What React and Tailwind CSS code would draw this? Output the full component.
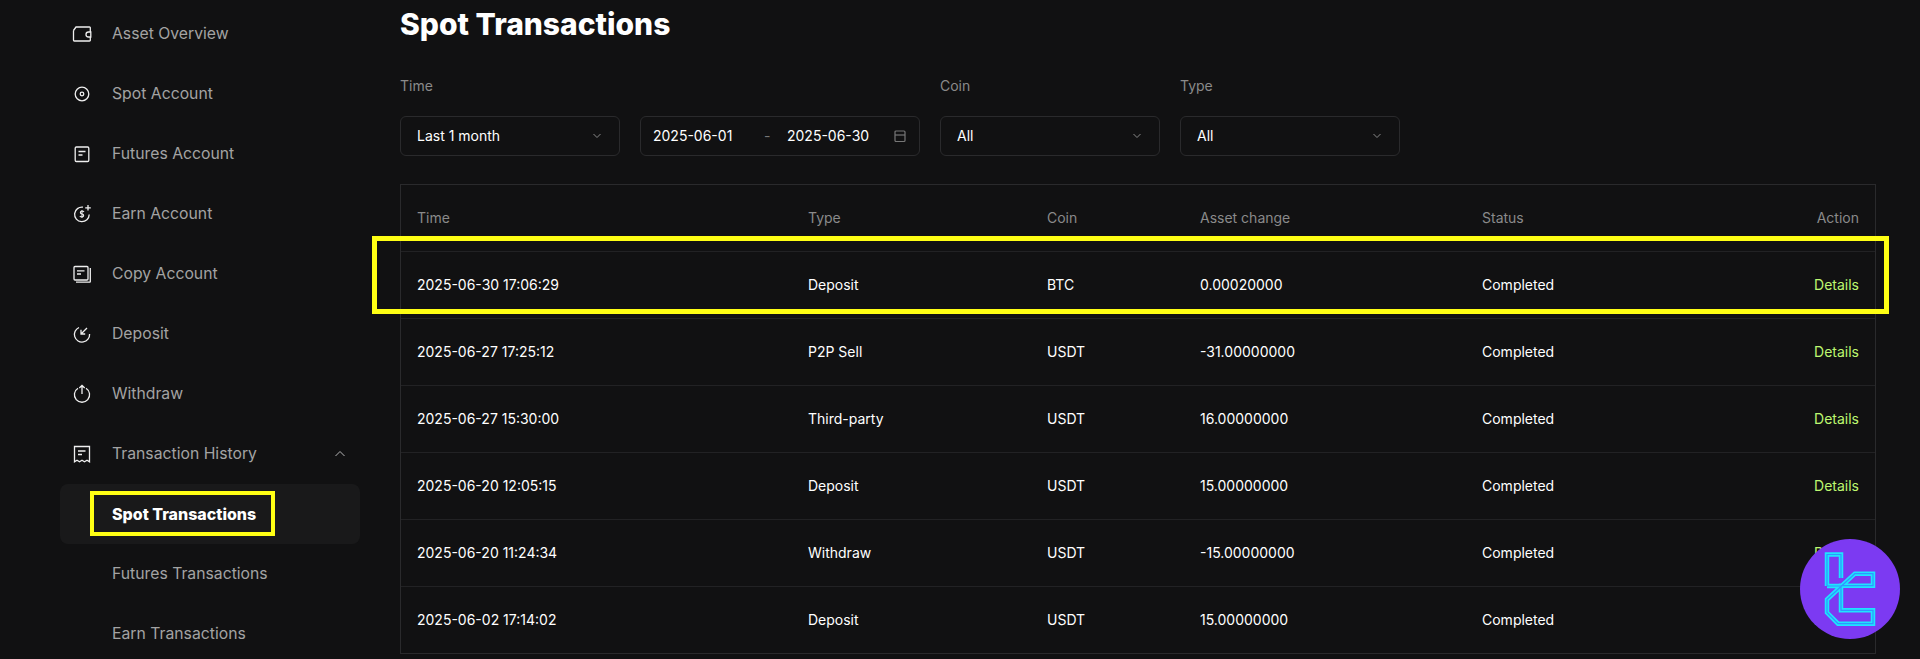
const font = { fontFamily: 'Inter, "Noto Sans", sans-serif' }

function Icon({ children }) {
  return (
    <svg viewBox="0 0 24 24" fill="none" stroke="#efefef" strokeWidth="1.3" className="w-6 h-6 shrink-0">
      {children}
    </svg>
  )
}

const icons = {
  wallet: (
    <Icon>
      <path d="M3.5 8.5 V18.2 a.8.8 0 0 0 .8.8 H19.5 a.8.8 0 0 0 .8-.8 V15 M20.3 10 V5.8 a.8.8 0 0 0-.8-.8 H6 L3.5 8.5" />
      <path d="M20.8 10 H18.5 a2.5 2.5 0 0 0 0 5 H20.8 Z" />
    </Icon>
  ),
  spot: (
    <Icon>
      <circle cx="12" cy="12" r="6.8" />
      <circle cx="12" cy="12" r="1.8" />
    </Icon>
  ),
  futures: (
    <Icon>
      <rect x="5.2" y="5" width="13.6" height="14.5" rx="1.2" />
      <path d="M8.5 9.5 H15.5 M8.5 13 H12.5" />
    </Icon>
  ),
  earn: (
    <Icon>
      <path d="M13 5.2 A7.3 7.3 0 1 0 19.2 12.5" />
      <path d="M14 10 C13.5 9.2 12.8 9 12 9 C9.8 9 9.8 12 12 12 C14.2 12 14.2 15 12 15 C11 15 10.2 14.6 9.8 14 M12 8 V16" strokeWidth="1.1" />
      <path d="M18 3 V8.5 M15.2 5.8 H20.8" />
    </Icon>
  ),
  copy: (
    <Icon>
      <rect x="4" y="4.5" width="14" height="13.5" rx="1" />
      <path d="M7 8.8 H14.5 M7 12 H11" />
      <path d="M20.3 6 V19.5 a.7.7 0 0 1-.7.7 H6" />
    </Icon>
  ),
  deposit: (
    <Icon>
      <path d="M9 5.5 A7.6 7.6 0 1 0 19.6 12" />
      <path d="M17 6 L11 12 M11 7.8 V12 H15.2" />
    </Icon>
  ),
  withdraw: (
    <Icon>
      <path d="M8 6.2 A7.6 7.6 0 1 0 16 6.2" />
      <path d="M12 12 V3.5 M9.3 6 L12 3.5 L14.7 6" />
    </Icon>
  ),
  history: (
    <Icon>
      <path d="M4.5 4.5 H19.5 V19.8 L17 18.2 L14.5 19.8 L12 18.2 L9.5 19.8 L7 18.2 L4.5 19.8 Z" />
      <path d="M8 9 H15.5 M8 12.5 H12" />
    </Icon>
  ),
}

function NavItem({ icon, label, children }) {
  return (
    <div className="h-[60px] flex items-center gap-[18px] pl-2.5 pr-3.5 text-[15.75px] text-[#a3a3a3]">
      {icons[icon]}
      <span className="flex-1">{label}</span>
      {children}
    </div>
  )
}

function Sidebar() {
  return (
    <aside className="w-[400px] shrink-0 pl-[60px] pr-10 pt-1">
      <NavItem icon="wallet" label="Asset Overview" />
      <NavItem icon="spot" label="Spot Account" />
      <NavItem icon="futures" label="Futures Account" />
      <NavItem icon="earn" label="Earn Account" />
      <NavItem icon="copy" label="Copy Account" />
      <NavItem icon="deposit" label="Deposit" />
      <NavItem icon="withdraw" label="Withdraw" />
      <NavItem icon="history" label="Transaction History">
        <svg viewBox="0 0 12 8" fill="none" stroke="#b5b5b5" strokeWidth="1" className="w-3 h-2">
          <path d="M1.5 6 L6 1.5 L10.5 6" />
        </svg>
      </NavItem>
      <div className="relative h-[60px] flex items-center pl-[52px] rounded-lg bg-[#19191a] text-base font-extrabold text-white">
        Spot Transactions
        <div className="absolute left-[30px] top-[7px] w-[185px] h-[45px] border-4 border-[#ffff14]" />
      </div>
      <div className="h-[60px] flex items-center pl-[52px] text-[15.75px] text-[#a3a3a3]">Futures Transactions</div>
      <div className="h-[60px] flex items-center pl-[52px] text-[15.75px] text-[#a3a3a3]">Earn Transactions</div>
    </aside>
  )
}

function Chevron() {
  return (
    <svg viewBox="0 0 12 8" fill="none" stroke="#8a8a8a" strokeWidth="1" className="w-3 h-2">
      <path d="M2.5 2 L6 5.5 L9.5 2" />
    </svg>
  )
}

function Select({ label, value, width }) {
  return (
    <div className={width}>
      <div className="h-5 leading-5 text-sm text-[#8a8a8a] mb-5">{label}</div>
      <div className="h-10 flex items-center justify-between pl-4 pr-4 rounded-md border border-[#2a2a2c] text-sm text-white">
        {value}
        <Chevron />
      </div>
    </div>
  )
}

function Filters() {
  return (
    <div className="flex gap-5 mt-8">
      <Select label="Time" value="Last 1 month" width="w-[220px]" />
      <div className="w-[280px] mt-10 h-10 flex items-center pl-3 pr-3 rounded-md border border-[#2a2a2c] text-sm text-white">
        <span className="w-[111px]">2025-06-01</span>
        <span className="w-[23px] text-[#777]">-</span>
        <span className="flex-1">2025-06-30</span>
        <svg viewBox="0 0 14 14" fill="none" stroke="#777" strokeWidth="1.2" className="w-3.5 h-3.5">
          <rect x="2" y="2" width="10" height="10.5" rx="1" />
          <path d="M2 6 H12" />
        </svg>
      </div>
      <Select label="Coin" value="All" width="w-[220px]" />
      <Select label="Type" value="All" width="w-[220px]" />
    </div>
  )
}

const rows = [
  ['2025-06-30 17:06:29', 'Deposit', 'BTC', '0.00020000'],
  ['2025-06-27 17:25:12', 'P2P Sell', 'USDT', '-31.00000000'],
  ['2025-06-27 15:30:00', 'Third-party', 'USDT', '16.00000000'],
  ['2025-06-20 12:05:15', 'Deposit', 'USDT', '15.00000000'],
  ['2025-06-20 11:24:34', 'Withdraw', 'USDT', '-15.00000000'],
  ['2025-06-02 17:14:02', 'Deposit', 'USDT', '15.00000000'],
]

function Table() {
  return (
    <div className="mt-7 border border-[#2a2a2c] text-sm">
      <div className="h-[66px] grid grid-cols-[391px_239px_153px_282px_1fr_auto] items-center px-4 text-[#8a8a8a]">
        <span>Time</span>
        <span>Type</span>
        <span>Coin</span>
        <span>Asset change</span>
        <span>Status</span>
        <span>Action</span>
      </div>
      {rows.map((r, i) => (
        <div key={i} className="relative h-[67px] grid grid-cols-[391px_239px_153px_282px_1fr_auto] items-center px-4 text-white border-t border-[#222224]">
          {r.map((c) => (
            <span key={c}>{c}</span>
          ))}
          <span>Completed</span>
          <span className="text-[#bdf870]">Details</span>
          {i === 0 && (
            <div className="absolute -left-[29px] -right-[14px] -top-[16px] h-[78px] border-[5px] border-[#ffff14]" />
          )}
        </div>
      ))}
    </div>
  )
}

function Badge() {
  const d = 'M27 47 V15.5 H41 V39 M27 47 H40 M27 60.5 L54.8 34.7 H73 V46.7 H41 V71.3 H73 V84.7 H38 L27 73.5 Z'
  return (
    <div className="absolute left-[1800px] top-[539px] w-[100px] h-[100px] rounded-full bg-[#7c3af2]">
      <svg viewBox="0 0 100 100" fill="none" className="w-full h-full">
        <path d={d} stroke="#1ee4ff" strokeWidth="4.5" />
        <path d={d} stroke="#2f96ff" strokeWidth="1.2" />
      </svg>
    </div>
  )
}

export default function App() {
  return (
    <div style={font} className="relative flex h-[659px] overflow-hidden bg-[#111112]">
      <Sidebar />
      <main className="flex-1 pr-[44px] pt-1">
        <h1 className="text-[30px] leading-10 font-extrabold text-white">Spot Transactions</h1>
        <Filters />
        <Table />
      </main>
      <Badge />
    </div>
  )
}
